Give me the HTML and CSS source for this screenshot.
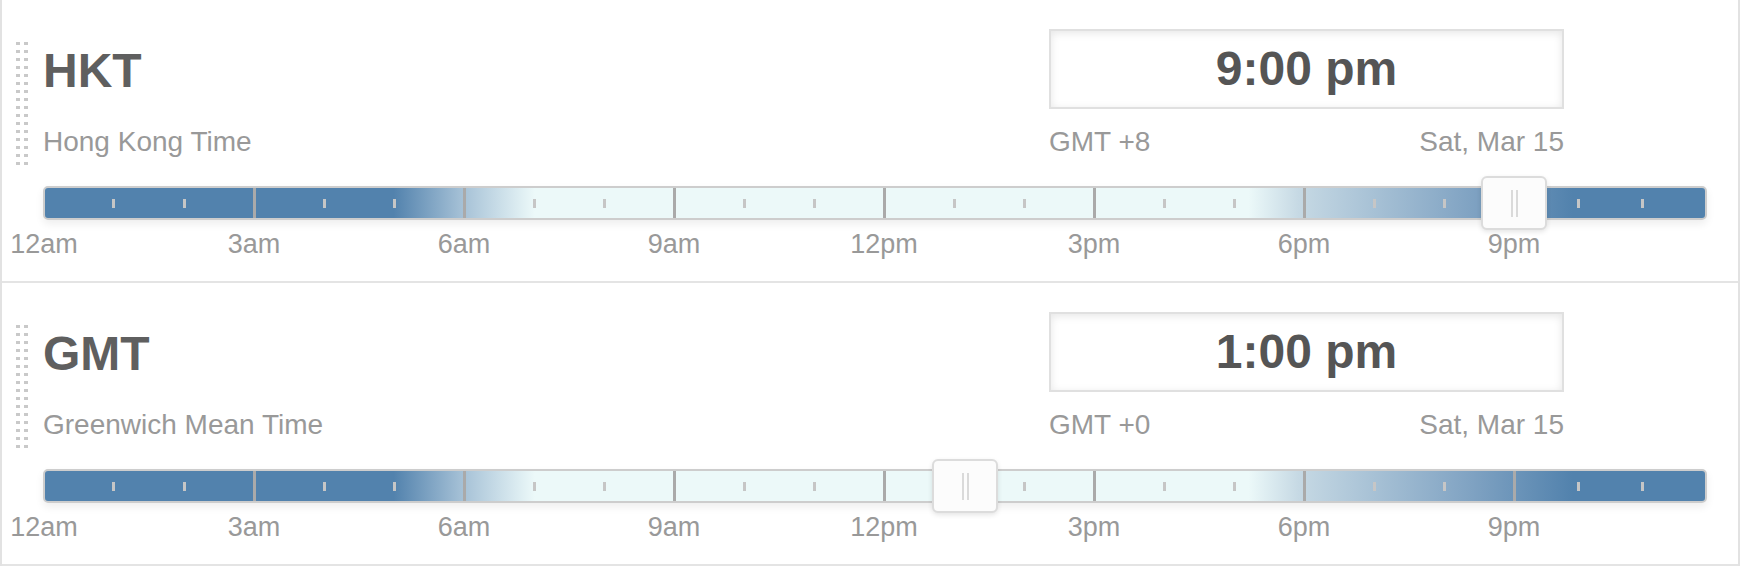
FILE: index.html
```html
<!DOCTYPE html>
<html lang="en">
<head>
    <meta charset="UTF-8">
    <meta name="viewport" content="width=device-width, initial-scale=1.0">
    <title>Time zones</title>
    <link rel="stylesheet" href="styles.css">
</head>
<body>
    <div class="zones">
        <section class="zone">
            <div class="grip"></div>
            <div class="main">
                <div class="head">
                    <div class="names">
                        <h2>HKT</h2>
                        <p>Hong Kong Time</p>
                    </div>
                    <div class="clock">
                        <div class="time">9:00 pm</div>
                        <div class="meta">
                            <span>GMT +8</span>
                            <span>Sat, Mar 15</span>
                        </div>
                    </div>
                </div>
                <div class="track">
                    <div class="seg"><i></i><i></i></div>
                    <div class="seg"><i></i><i></i></div>
                    <div class="seg"><i></i><i></i></div>
                    <div class="seg"><i></i><i></i></div>
                    <div class="seg"><i></i><i></i></div>
                    <div class="seg"><i></i><i></i></div>
                    <div class="seg"><i></i><i></i></div>
                    <div class="seg"><i></i><i></i></div>
                    <div class="knob" style="left: 1436px"></div>
                </div>
                <div class="labels">
                    <span>12am</span>
                    <span>3am</span>
                    <span>6am</span>
                    <span>9am</span>
                    <span>12pm</span>
                    <span>3pm</span>
                    <span>6pm</span>
                    <span>9pm</span>
                </div>
            </div>
        </section>
        <section class="zone">
            <div class="grip"></div>
            <div class="main">
                <div class="head">
                    <div class="names">
                        <h2>GMT</h2>
                        <p>Greenwich Mean Time</p>
                    </div>
                    <div class="clock">
                        <div class="time">1:00 pm</div>
                        <div class="meta">
                            <span>GMT +0</span>
                            <span>Sat, Mar 15</span>
                        </div>
                    </div>
                </div>
                <div class="track">
                    <div class="seg"><i></i><i></i></div>
                    <div class="seg"><i></i><i></i></div>
                    <div class="seg"><i></i><i></i></div>
                    <div class="seg"><i></i><i></i></div>
                    <div class="seg"><i></i><i></i></div>
                    <div class="seg"><i></i><i></i></div>
                    <div class="seg"><i></i><i></i></div>
                    <div class="seg"><i></i><i></i></div>
                    <div class="knob" style="left: 887px"></div>
                </div>
                <div class="labels">
                    <span>12am</span>
                    <span>3am</span>
                    <span>6am</span>
                    <span>9am</span>
                    <span>12pm</span>
                    <span>3pm</span>
                    <span>6pm</span>
                    <span>9pm</span>
                </div>
            </div>
        </section>
    </div>
</body>
</html>
```

FILE: styles.css
```css
* {
    margin: 0;
    padding: 0;
    box-sizing: border-box;
}

body {
    font-family: "Liberation Sans", Arial, sans-serif;
    background-color: #fff;
}

.zones {
    width: 1740px;
    border-left: 2px solid #e2e2e2;
    border-right: 2px solid #e2e2e2;
}

.zone {
    height: 283px;
    display: flex;
    padding: 29px 0 0 14px;
    border-bottom: 2px solid #e4e4e4;
}

.grip {
    width: 12px;
    height: 123px;
    margin: 13px 15px 0 0;
    background-image:
        linear-gradient(to right, transparent 4px, #fff 4px),
        linear-gradient(to bottom, #c9c9c9 3px, transparent 3px);
    background-size: 8px 8px;
}

.main {
    width: 1664px;
    display: flex;
    flex-direction: column;
}

.head {
    display: flex;
    align-items: flex-start;
}

.names h2 {
    margin-top: 18px;
    font-size: 48px;
    line-height: 48px;
    font-weight: bold;
    color: #5f5f5f;
}

.names p {
    margin-top: 33px;
    font-size: 28px;
    line-height: 28px;
    color: #999;
}

.clock {
    width: 515px;
    margin: 0 143px 0 auto;
}

.time {
    height: 80px;
    display: flex;
    justify-content: center;
    align-items: center;
    border: 2px solid #e0e0e0;
    box-shadow: inset 0 2px 8px rgba(0, 0, 0, 0.1);
    font-size: 48px;
    line-height: 48px;
    font-weight: bold;
    color: #555;
}

.meta {
    display: flex;
    justify-content: space-between;
    margin-top: 19px;
    font-size: 28px;
    line-height: 28px;
    color: #999;
}

.track {
    position: relative;
    height: 34px;
    margin-top: 30px;
    display: grid;
    grid-template-columns: 208px repeat(6, 210px) 1fr;
    border: 2px solid #cdcdcd;
    border-radius: 5px;
    box-shadow: 0 4px 8px rgba(0, 0, 0, 0.07);
    background: linear-gradient(to right,
        #5282ad 0%,
        #5282ad 21%,
        #a3bfd5 25%,
        #ecf9f9 29.5%,
        #ecf9f9 72.5%,
        #c6d9e4 75.5%,
        #7fa2c2 86%,
        #5282ad 92%,
        #5282ad 100%);
}

.seg {
    display: flex;
    justify-content: space-evenly;
    align-items: center;
}

.seg + .seg {
    border-left: 3px solid #aaa;
}

.seg i {
    width: 3px;
    height: 9px;
    background-color: #c6c6c6;
}

.knob {
    position: absolute;
    top: -12px;
    width: 66px;
    height: 54px;
    display: flex;
    justify-content: center;
    align-items: center;
    background-color: #fcfcfc;
    border: 2px solid #dcdcdc;
    border-radius: 6px;
    box-shadow: 0 2px 5px rgba(0, 0, 0, 0.1);
}

.knob::before {
    content: "";
    width: 3px;
    height: 27px;
    border-left: 2px solid #dadada;
    border-right: 2px solid #dadada;
    box-sizing: content-box;
}

.labels {
    display: grid;
    grid-template-columns: repeat(8, 210px);
    margin: 11px 0 0 -104px;
    font-size: 27px;
    line-height: 26px;
    color: #999;
    text-align: center;
}
```
